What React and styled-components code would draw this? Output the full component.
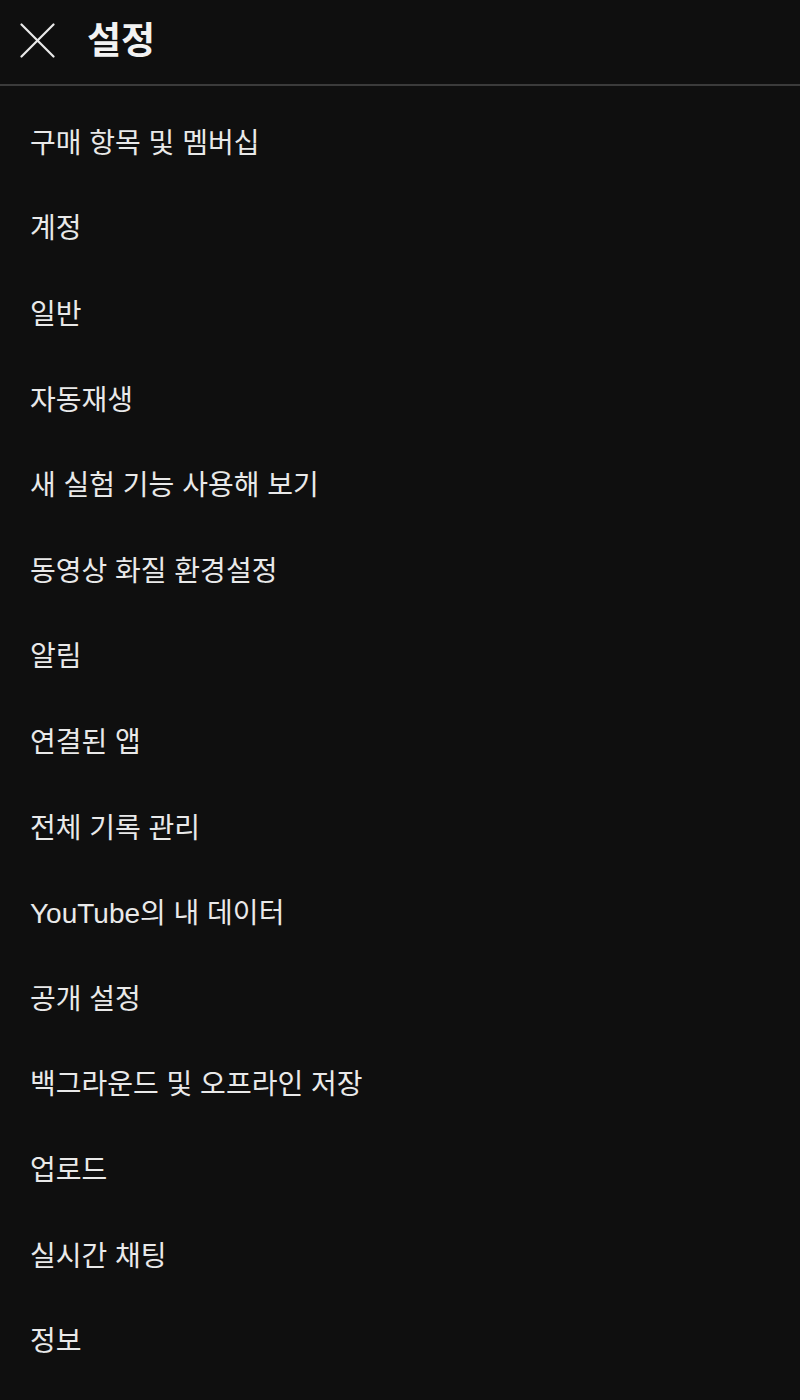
import React from "react";
import styled, { createGlobalStyle } from "styled-components";

const Global = createGlobalStyle`
  html, body { margin: 0; padding: 0; background: #0f0f0f; }
  body { font-family: "Liberation Sans", "Noto Sans CJK KR", sans-serif; color: #eaeaea; }
`;

const Page = styled.div`
  width: 800px;
  min-height: 1400px;
  background: #0f0f0f;
`;

const Header = styled.header`
  height: 86px;
  display: flex;
  align-items: center;
  border-bottom: 2px solid #3b3b3b;
  box-sizing: border-box;
  padding-left: 20px;
  gap: 32px;
`;

const CloseButton = styled.button`
  background: none;
  border: none;
  padding: 0;
  width: 35px;
  height: 35px;
  display: flex;
  align-items: center;
  justify-content: center;
  cursor: pointer;
  margin-top: -4px;
`;

const Title = styled.h1`
  margin: 0;
  font-family: "Noto Sans CJK KR", sans-serif;
  font-size: 37px;
  font-weight: 700;
  color: #f2f2f2;
  line-height: 1;
  margin-top: -8px;
`;

const List = styled.ul`
  list-style: none;
  margin: 0;
  padding: 12px 0 0 0;
`;

const Item = styled.li`
  height: 85.6px;
  display: flex;
  align-items: center;
  padding-left: 30px;
  font-size: 28px;
  color: #e9e9e9;
`;

const items = [
  "구매 항목 및 멤버십",
  "계정",
  "일반",
  "자동재생",
  "새 실험 기능 사용해 보기",
  "동영상 화질 환경설정",
  "알림",
  "연결된 앱",
  "전체 기록 관리",
  "YouTube의 내 데이터",
  "공개 설정",
  "백그라운드 및 오프라인 저장",
  "업로드",
  "실시간 채팅",
  "정보",
];

export default function App() {
  return (
    <Page>
      <Global />
      <Header>
        <CloseButton aria-label="닫기">
          <svg width="35" height="35" viewBox="0 0 35 35">
            <path d="M1.5 1.5 L33.5 33.5 M33.5 1.5 L1.5 33.5" stroke="#eaeaea" strokeWidth="2.2" strokeLinecap="round" />
          </svg>
        </CloseButton>
        <Title>설정</Title>
      </Header>
      <List>
        {items.map((t) => (
          <Item key={t}>{t}</Item>
        ))}
      </List>
    </Page>
  );
}
